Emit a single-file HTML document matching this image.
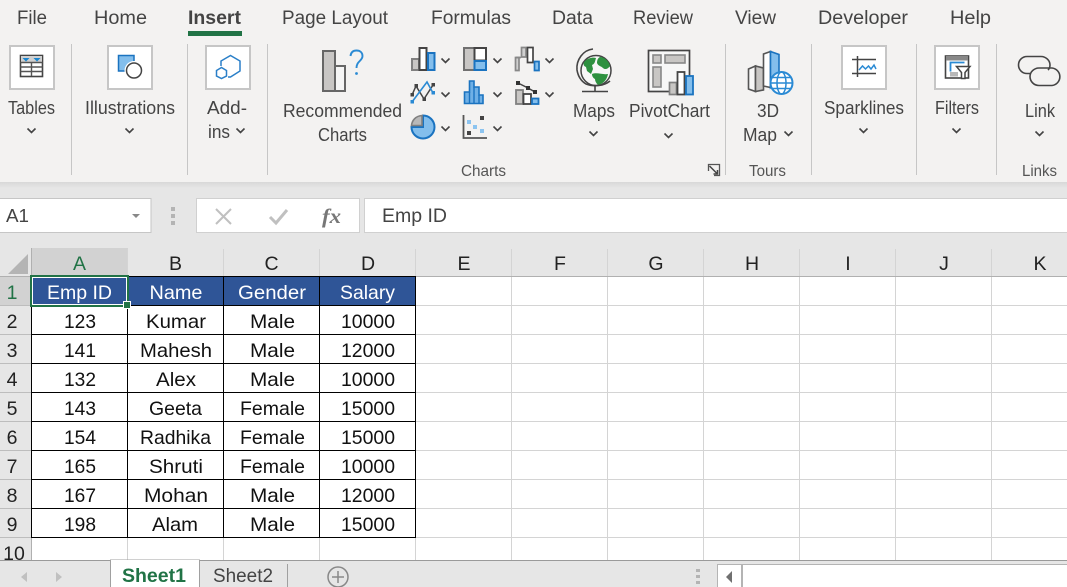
<!DOCTYPE html>
<html><head><meta charset="utf-8"><title>Excel</title>
<style>
html,body{margin:0;padding:0;width:1067px;height:587px;overflow:hidden;background:#fff}
svg{display:block;font-family:"Liberation Sans",sans-serif}
.t{font-size:19px;fill:#444}
.g{font-size:16px;fill:#555}
.c{font-size:19.5px;fill:#111;text-anchor:middle}
.h{font-size:19.5px;fill:#fff;text-anchor:middle}
.ch{font-size:19.5px;fill:#222;text-anchor:middle}
.gr line{stroke:#d4d4d4;stroke-width:1}
.bk line{stroke:#000;stroke-width:1}
.sep line{stroke:#c6c6c6;stroke-width:1}
.chev path{fill:none;stroke:#444;stroke-width:1.6}
.box{fill:#fff;stroke:#c6c6c6;stroke-width:2}
</style></head><body>
<svg width="1067" height="587" viewBox="0 0 1067 587" xmlns="http://www.w3.org/2000/svg">
<defs><linearGradient id="sh" x1="0" y1="0" x2="0" y2="1"><stop offset="0" stop-color="#d8d8d8"/><stop offset="1" stop-color="#e6e6e6"/></linearGradient></defs>
<rect width="1067" height="587" fill="#fff"/>
<rect width="1067" height="248" fill="#e6e6e6"/>
<rect width="1067" height="182" fill="#f3f2f1"/>
<rect y="182" width="1067" height="6" fill="url(#sh)"/>

<!-- tabs -->
<g class="t">
<text x="17" y="24" textLength="30" lengthAdjust="spacingAndGlyphs">File</text>
<text x="94" y="24" textLength="53" lengthAdjust="spacingAndGlyphs">Home</text>
<text x="188" y="24" textLength="53" lengthAdjust="spacingAndGlyphs" font-weight="bold">Insert</text>
<text x="282" y="24" textLength="106" lengthAdjust="spacingAndGlyphs">Page Layout</text>
<text x="431" y="24" textLength="80" lengthAdjust="spacingAndGlyphs">Formulas</text>
<text x="552" y="24" textLength="41" lengthAdjust="spacingAndGlyphs">Data</text>
<text x="633" y="24" textLength="60" lengthAdjust="spacingAndGlyphs">Review</text>
<text x="735" y="24" textLength="41" lengthAdjust="spacingAndGlyphs">View</text>
<text x="818" y="24" textLength="90" lengthAdjust="spacingAndGlyphs">Developer</text>
<text x="950" y="24" textLength="41" lengthAdjust="spacingAndGlyphs">Help</text>
</g>
<rect x="188" y="31" width="54" height="5" fill="#217346"/>

<!-- separators -->
<g class="sep">
<line x1="71.5" y1="44" x2="71.5" y2="175"/><line x1="187.5" y1="44" x2="187.5" y2="175"/>
<line x1="267.5" y1="44" x2="267.5" y2="175"/><line x1="725.5" y1="44" x2="725.5" y2="175"/>
<line x1="811.5" y1="44" x2="811.5" y2="175"/><line x1="916.5" y1="44" x2="916.5" y2="175"/>
<line x1="996.5" y1="44" x2="996.5" y2="175"/>
</g>

<!-- ribbon labels -->
<g class="t" style="font-size:18.5px">
<text x="8" y="114" textLength="47" lengthAdjust="spacingAndGlyphs">Tables</text>
<text x="85" y="114" textLength="90" lengthAdjust="spacingAndGlyphs">Illustrations</text>
<text x="207" y="114" textLength="40" lengthAdjust="spacingAndGlyphs">Add-</text>
<text x="208" y="138" textLength="22" lengthAdjust="spacingAndGlyphs">ins</text>
<text x="283" y="117" textLength="119" lengthAdjust="spacingAndGlyphs">Recommended</text>
<text x="318" y="141" textLength="49" lengthAdjust="spacingAndGlyphs">Charts</text>
<text x="573" y="117" textLength="42" lengthAdjust="spacingAndGlyphs">Maps</text>
<text x="629" y="117" textLength="81" lengthAdjust="spacingAndGlyphs">PivotChart</text>
<text x="757" y="117" textLength="22" lengthAdjust="spacingAndGlyphs">3D</text>
<text x="743" y="141" textLength="34" lengthAdjust="spacingAndGlyphs">Map</text>
<text x="824" y="114" textLength="80" lengthAdjust="spacingAndGlyphs">Sparklines</text>
<text x="935" y="114" textLength="44" lengthAdjust="spacingAndGlyphs">Filters</text>
<text x="1025" y="117" textLength="30" lengthAdjust="spacingAndGlyphs">Link</text>
</g>
<g class="g">
<text x="461" y="176" textLength="45" lengthAdjust="spacingAndGlyphs">Charts</text>
<text x="749" y="176" textLength="37" lengthAdjust="spacingAndGlyphs">Tours</text>
<text x="1022" y="176" textLength="35" lengthAdjust="spacingAndGlyphs">Links</text>
</g>

<!-- chevrons -->
<g class="chev">
<path d="M27.5 128.500l4 4 4-4M125.500 128.500l4 4 4-4M236.500 128.500l4 4 4-4"/>
<path d="M441.500 58.500l4 4 4-4M441.500 92.500l4 4 4-4M441.500 126.500l4 4 4-4"/>
<path d="M493.500 58.500l4 4 4-4M493.500 92.500l4 4 4-4M493.500 126.500l4 4 4-4"/>
<path d="M545.500 58.500l4 4 4-4M545.500 92.500l4 4 4-4"/>
<path d="M589.500 131.500l4 4 4-4M664.500 133.500l4 4 4-4M784.500 131.500l4 4 4-4M859.500 128.500l4 4 4-4M952.500 128.500l4 4 4-4M1035.500 131.500l4 4 4-4"/>
</g>

<!-- boxed buttons -->
<rect class="box" x="10" y="46" width="44" height="43"/>
<rect class="box" x="108" y="46" width="44" height="43"/>
<rect class="box" x="206" y="46" width="44" height="43"/>
<rect class="box" x="842" y="46" width="44" height="43"/>
<rect class="box" x="935" y="46" width="44" height="43"/>

<!-- tables icon -->
<rect x="20.500" y="55.500" width="22" height="21" fill="#fff" stroke="#444" stroke-width="1.600"/>
<rect x="21" y="56" width="21" height="6" fill="#d0d0d0"/>
<path d="M22.500 58h7l-3.500 3.500zM33.500 58h7l-3.500 3.500z" fill="#1a86d0"/>
<path d="M20.500 62.500h22M20.500 67h22M20.500 71.500h22M31.500 62v14" stroke="#555" stroke-width="1.400" fill="none"/>

<!-- illustrations icon -->
<rect x="118.500" y="55.500" width="15.500" height="15.500" fill="#83beec" stroke="#1a73c0" stroke-width="1.500"/>
<circle cx="134" cy="70.500" r="9.500" fill="#fff"/>
<circle cx="134" cy="70.500" r="7.500" fill="#fff" stroke="#444" stroke-width="1.500"/>

<!-- add-ins icon -->
<path d="M221 66v-5l9.500-5.500 9.500 5.500v10l-9.500 6h-2.500" fill="none" stroke="#2a7fc8" stroke-width="1.500"/>
<path d="M221.500 67.500l5 3v5.500l-5 2.500-5-2.500v-5.500z" fill="none" stroke="#2a7fc8" stroke-width="1.500"/>

<!-- recommended charts icon -->
<rect x="323" y="51" width="12" height="40" fill="#c8c6c4" stroke="#666" stroke-width="2"/>
<rect x="335" y="66" width="10" height="25" fill="#f5f5f5" stroke="#666" stroke-width="2"/>
<path d="M350.500 56c.5-4 3-5.500 6-5.500 3.500 0 6 2 6 5.500 0 5-6 5-6 12" fill="none" stroke="#2a8ad4" stroke-width="1.900"/>
<circle cx="356.500" cy="73.500" r="1.400" fill="#2a8ad4"/>

<!-- bar -->
<rect x="412" y="59" width="7" height="11" fill="#c8c6c4" stroke="#808080" stroke-width="2"/>
<rect x="419.500" y="48" width="7" height="22" fill="#fff" stroke="#444" stroke-width="2"/>
<rect x="428" y="53" width="6.500" height="17" fill="#83beec" stroke="#1a73c0" stroke-width="2"/>
<!-- line -->
<path d="M412 95l4-9 8 13 9-14" fill="none" stroke="#444" stroke-width="1.500"/>
<path d="M412 102l15-20 6 11" fill="none" stroke="#2a8ad4" stroke-width="1.600"/>
<path d="M410.500 100h3.500v3.500h-3.500zM431.500 91h3.500v3.500h-3.500z" fill="#2a8ad4"/>
<path d="M410.500 93h3.500v3.500h-3.500zM414.500 84h3.500v3.500h-3.500zM422.500 97.500h3.500v3.500h-3.500zM431.500 83h3.500v3.500h-3.500z" fill="#444"/>
<!-- pie -->
<path d="M423 115.500a11.500 11.500 0 1 1-11.500 11.500h11.500z" fill="#83beec" stroke="#1a73c0" stroke-width="2"/>
<path d="M422 115.500v10h-10.500c.5-5 4-9.500 10.500-10z" fill="#b8b8b8" stroke="#808080" stroke-width="1.600"/>
<!-- treemap -->
<rect x="464" y="48" width="10.500" height="22" fill="#c8c6c4" stroke="#707070" stroke-width="2"/>
<rect x="474.500" y="48" width="11.500" height="12.500" fill="#fff" stroke="#444" stroke-width="2"/>
<rect x="474.500" y="61" width="11.500" height="9" fill="#83beec" stroke="#1a73c0" stroke-width="2"/>
<!-- histogram -->
<path d="M464.500 103.500v-11.500h5v-11h4.500v6h5v8h4v8.500z" fill="#6fb0e6" stroke="#1a73c0" stroke-width="1.600"/>
<path d="M469.500 103v-11M474 103v-16M479 103v-8" stroke="#1a73c0" stroke-width="1.400"/>
<!-- scatter -->
<path d="M463.500 115v23H487" fill="none" stroke="#555" stroke-width="1.800"/>
<rect x="480" y="116" width="4" height="4" fill="#444"/>
<rect x="467" y="120" width="4" height="4" fill="#8cc4f0"/>
<rect x="473" y="125" width="4" height="4" fill="#8cc4f0"/>
<rect x="480" y="129" width="4" height="4" fill="#8cc4f0"/>
<rect x="467" y="131" width="4" height="4" fill="#444"/>
<!-- waterfall -->
<path d="M515.500 70.500V57.500h3.500v13z" fill="#d0d0d0" stroke="#888" stroke-width="1.700"/>
<path d="M521.500 57V47.500h4.500V57zM516 57.500h5" fill="#d0d0d0" stroke="#888" stroke-width="1.700"/>
<path d="M527.500 47.500h5.500v15h-5.500z" fill="#fff" stroke="#444" stroke-width="1.700"/>
<path d="M534.500 61.500h4.500v9h-4.500z" fill="#83beec" stroke="#1a73c0" stroke-width="1.700"/>
<!-- combo -->
<path d="M518 83l10 5 7 4" fill="none" stroke="#444" stroke-width="1.500"/>
<path d="M516 81h4v4h-4zM526 86h4v4h-4zM533 90h4v4h-4z" fill="#333"/>
<rect x="516" y="90" width="7" height="14" fill="#c8c6c4" stroke="#808080" stroke-width="1.800"/>
<rect x="523.500" y="94" width="7.500" height="10" fill="#fff" stroke="#444" stroke-width="1.800"/>
<rect x="532" y="98.500" width="6.500" height="5.500" fill="#83beec" stroke="#1a73c0" stroke-width="1.800"/>

<!-- globe -->
<circle cx="596" cy="70.500" r="15" fill="#f7f7f7" stroke="#444" stroke-width="1.500"/>
<path d="M585 61c3-3 8-4 11-3-1 3-1 6-4 7l1 4-2 5-4-3-1-4c-3-1-3-4-1-6z" fill="#2e9140"/>
<path d="M600 57c4 0 9 4 10 9-2 3-5 4-7 2-2-2-5-2-6-5 0-3 1-5 3-6z" fill="#2e9140"/>
<path d="M592 74c5-2 11 1 16 0-1 6-5 10-10 11-2-2-3-4-3-6-2-1-3-3-3-5z" fill="#2e9140"/>
<path d="M593 49c-10 1-17 11-16 21 1 6 4 11 9 14 8 3 18 2 24-3" fill="none" stroke="#444" stroke-width="1.600"/>
<path d="M595 86v5M582 91.500h26" stroke="#444" stroke-width="1.600" fill="none"/>

<!-- pivot chart -->
<rect x="648.500" y="50.500" width="41" height="41" fill="#f7f7f7" stroke="#444" stroke-width="1.700"/>
<rect x="653" y="55" width="8" height="8" fill="#c8c6c4" stroke="#888" stroke-width="1.600"/>
<rect x="665" y="55" width="20" height="8" fill="#c8c6c4" stroke="#888" stroke-width="1.600"/>
<rect x="653" y="67" width="8" height="20" fill="#c8c6c4" stroke="#888" stroke-width="1.600"/>
<rect x="669.500" y="82.500" width="7" height="12" fill="#c8c6c4" stroke="#808080" stroke-width="1.700"/>
<rect x="677.500" y="72" width="7" height="22.500" fill="#fff" stroke="#444" stroke-width="1.800"/>
<rect x="686" y="76" width="7" height="18.500" fill="#83beec" stroke="#1a73c0" stroke-width="1.800"/>

<!-- 3D map -->
<path d="M748.500 69l7-3v25.500l-7-2.500z" fill="#f7f7f7" stroke="#555" stroke-width="1.600"/>
<path d="M755.500 66l8 2v22l-8 1.500z" fill="#c8c6c4" stroke="#555" stroke-width="1.600"/>
<path d="M763.500 54l7-2.500v36l-7-1.500z" fill="#fff" stroke="#555" stroke-width="1.600"/>
<path d="M770.500 51.500l8.500 3v24l-8.500 9z" fill="#83beec" stroke="#1a73c0" stroke-width="1.600"/>
<circle cx="781.500" cy="83" r="11" fill="#fff" stroke="#2a8ad4" stroke-width="2"/>
<ellipse cx="781.500" cy="83" rx="4.500" ry="11" fill="none" stroke="#2a8ad4" stroke-width="1.500"/>
<path d="M770.500 83h22M772.500 77.500h18M772.500 88.500h18" stroke="#2a8ad4" stroke-width="1.400" fill="none"/>

<!-- sparklines -->
<path d="M852 59.500h24M852 73.500h24M857.500 56v21" stroke="#444" stroke-width="1.500" fill="none"/>
<path d="M859 70l3.500-4 3 3 3-3 2.500 3 3-4 2 4" fill="none" stroke="#2a8ad4" stroke-width="1.500"/>

<!-- filters -->
<rect x="945.500" y="56" width="23" height="22" fill="#fff" stroke="#444" stroke-width="1.600"/>
<rect x="946" y="56" width="22" height="4.500" fill="#888"/>
<path d="M950.500 71.500v-9h14" fill="none" stroke="#2a8ad4" stroke-width="1.800"/>
<rect x="950" y="72" width="8" height="4.500" fill="#b8b8b8"/>
<path d="M956.500 66.500h13.500l-5 6v6l-3.500 0v-6z" fill="#fff" stroke="#444" stroke-width="1.500"/>

<!-- link -->
<path d="M1030 73.500h-3a8.500 8.500 0 0 1 0-17h14c5 0 9 4 9 8.500 0 2-1 4-2 5" fill="none" stroke="#444" stroke-width="1.600"/>
<path d="M1041 68h11a8.800 8.800 0 0 1 0 17.500h-13c-5 0-9-4-9-9 0-4.500 4-8.500 9-8.500h2" fill="none" stroke="#444" stroke-width="1.600"/>

<!-- dialog launcher -->
<path d="M708.500 171v-6.500h11v11H714" fill="none" stroke="#555" stroke-width="1.300"/>
<path d="M709.500 166l8 8M713.500 174h4v-4" fill="none" stroke="#444" stroke-width="1.500"/>

<!-- formula bar -->
<rect x="-2" y="198.500" width="153" height="34" fill="#fff" stroke="#c6c6c6"/>
<text x="6" y="222" textLength="23" lengthAdjust="spacingAndGlyphs" style="font-size:18.500px;fill:#444">A1</text>
<path d="M132 214h8l-4 4z" fill="#888"/>
<path d="M171 207h4v4h-4zM171 214h4v4h-4zM171 221h4v4h-4z" fill="#b4b4b4"/>
<rect x="196.500" y="198.500" width="163" height="34" fill="#fff" stroke="#d0d0d0"/>
<path d="M216 209l15 15M231 209l-15 15" stroke="#c0c0c0" stroke-width="2" fill="none"/>
<path d="M270 217l6 6 11-13" stroke="#c0c0c0" stroke-width="3" fill="none"/>
<text x="322" y="223" style="font-size:21px;fill:#777;font-family:'Liberation Serif',serif;font-style:italic;font-weight:bold" textLength="19" lengthAdjust="spacingAndGlyphs">fx</text>
<rect x="364.500" y="198.500" width="704" height="34" fill="#fff" stroke="#d0d0d0"/>
<text x="382" y="222" textLength="65" lengthAdjust="spacingAndGlyphs" style="font-size:19.500px;fill:#444">Emp ID</text>

<!-- grid -->
<rect x="0" y="248" width="1067" height="29" fill="#e6e6e6"/>
<rect x="0" y="248" width="31" height="312" fill="#e6e6e6"/>
<rect x="31" y="248" width="97" height="28" fill="#d2d2d2"/>
<rect x="0" y="277" width="31" height="29" fill="#d2d2d2"/>
<path d="M8 274L28 254V274z" fill="#b4b4b4"/>
<rect x="31" y="277" width="1036" height="283" fill="#fff"/>
<g class="gr">
<line x1="511.500" y1="249" x2="511.500" y2="560"/><line x1="607.500" y1="249" x2="607.500" y2="560"/>
<line x1="703.500" y1="249" x2="703.500" y2="560"/><line x1="799.500" y1="249" x2="799.500" y2="560"/>
<line x1="895.500" y1="249" x2="895.500" y2="560"/><line x1="991.500" y1="249" x2="991.500" y2="560"/>
<line x1="127.500" y1="538" x2="127.500" y2="560"/><line x1="223.500" y1="538" x2="223.500" y2="560"/>
<line x1="319.500" y1="538" x2="319.500" y2="560"/><line x1="415.500" y1="538" x2="415.500" y2="560"/>
<line x1="127.500" y1="249" x2="127.500" y2="276"/><line x1="223.500" y1="249" x2="223.500" y2="276"/>
<line x1="319.500" y1="249" x2="319.500" y2="276"/><line x1="415.500" y1="249" x2="415.500" y2="276"/>
<line x1="416" y1="305.500" x2="1067" y2="305.500"/><line x1="416" y1="334.500" x2="1067" y2="334.500"/>
<line x1="416" y1="363.500" x2="1067" y2="363.500"/><line x1="416" y1="392.500" x2="1067" y2="392.500"/>
<line x1="416" y1="421.500" x2="1067" y2="421.500"/><line x1="416" y1="450.500" x2="1067" y2="450.500"/>
<line x1="416" y1="479.500" x2="1067" y2="479.500"/><line x1="416" y1="508.500" x2="1067" y2="508.500"/>
<line x1="416" y1="537.500" x2="1067" y2="537.500"/>
</g>
<line x1="0" y1="276.500" x2="1067" y2="276.500" stroke="#b0b0b0"/>
<line x1="31.500" y1="248" x2="31.500" y2="560" stroke="#b0b0b0"/>
<g stroke="#bdbdbd">
<line x1="0" y1="305.500" x2="31" y2="305.500"/><line x1="0" y1="334.500" x2="31" y2="334.500"/>
<line x1="0" y1="363.500" x2="31" y2="363.500"/><line x1="0" y1="392.500" x2="31" y2="392.500"/>
<line x1="0" y1="421.500" x2="31" y2="421.500"/><line x1="0" y1="450.500" x2="31" y2="450.500"/>
<line x1="0" y1="479.500" x2="31" y2="479.500"/><line x1="0" y1="508.500" x2="31" y2="508.500"/>
<line x1="0" y1="537.500" x2="31" y2="537.500"/>
</g>

<!-- table header fill -->
<rect x="32" y="277" width="384" height="28" fill="#2f5597"/>
<g class="bk">
<line x1="32" y1="276.500" x2="416" y2="276.500"/>
<line x1="32" y1="305.500" x2="416" y2="305.500"/><line x1="32" y1="334.500" x2="416" y2="334.500"/>
<line x1="32" y1="363.500" x2="416" y2="363.500"/><line x1="32" y1="392.500" x2="416" y2="392.500"/>
<line x1="32" y1="421.500" x2="416" y2="421.500"/><line x1="32" y1="450.500" x2="416" y2="450.500"/>
<line x1="32" y1="479.500" x2="416" y2="479.500"/><line x1="32" y1="508.500" x2="416" y2="508.500"/>
<line x1="32" y1="537.500" x2="416" y2="537.500"/>
<line x1="31.500" y1="277" x2="31.500" y2="538"/>
<line x1="127.500" y1="277" x2="127.500" y2="538"/><line x1="223.500" y1="277" x2="223.500" y2="538"/>
<line x1="319.500" y1="277" x2="319.500" y2="538"/><line x1="415.500" y1="277" x2="415.500" y2="538"/>
</g>

<!-- column headings -->
<g class="ch">
<text x="79.500" y="270" style="fill:#217346">A</text><text x="175.500" y="270">B</text><text x="271.500" y="270">C</text>
<text x="368" y="270">D</text><text x="464" y="270">E</text><text x="560" y="270">F</text>
<text x="656" y="270">G</text><text x="752" y="270">H</text><text x="848" y="270">I</text>
<text x="944" y="270">J</text><text x="1040" y="270">K</text>
</g>
<g class="ch">
<text x="12" y="299" style="fill:#217346">1</text><text x="12" y="328">2</text><text x="12" y="357">3</text>
<text x="12" y="386">4</text><text x="12" y="415">5</text><text x="12" y="444">6</text>
<text x="12" y="473">7</text><text x="12" y="502">8</text><text x="12" y="531">9</text>
<text x="14" y="560">10</text>
</g>

<!-- header text -->
<g class="h">
<text x="79.500" y="299" textLength="65" lengthAdjust="spacingAndGlyphs">Emp ID</text>
<text x="176" y="299" textLength="53" lengthAdjust="spacingAndGlyphs">Name</text>
<text x="272" y="299" textLength="68" lengthAdjust="spacingAndGlyphs">Gender</text>
<text x="367.500" y="299" textLength="55" lengthAdjust="spacingAndGlyphs">Salary</text>
</g>

<!-- cells -->
<g class="c">
<text x="80" y="328" textLength="32" lengthAdjust="spacingAndGlyphs">123</text>
<text x="176" y="328" textLength="60" lengthAdjust="spacingAndGlyphs">Kumar</text>
<text x="272.500" y="328" textLength="45" lengthAdjust="spacingAndGlyphs">Male</text>
<text x="368" y="328" textLength="54" lengthAdjust="spacingAndGlyphs">10000</text>
<text x="80" y="357" textLength="32" lengthAdjust="spacingAndGlyphs">141</text>
<text x="176" y="357" textLength="72" lengthAdjust="spacingAndGlyphs">Mahesh</text>
<text x="272.500" y="357" textLength="45" lengthAdjust="spacingAndGlyphs">Male</text>
<text x="368" y="357" textLength="54" lengthAdjust="spacingAndGlyphs">12000</text>
<text x="80" y="386" textLength="32" lengthAdjust="spacingAndGlyphs">132</text>
<text x="176" y="386" textLength="40" lengthAdjust="spacingAndGlyphs">Alex</text>
<text x="272.500" y="386" textLength="45" lengthAdjust="spacingAndGlyphs">Male</text>
<text x="368" y="386" textLength="54" lengthAdjust="spacingAndGlyphs">10000</text>
<text x="80" y="415" textLength="32" lengthAdjust="spacingAndGlyphs">143</text>
<text x="175.500" y="415" textLength="53" lengthAdjust="spacingAndGlyphs">Geeta</text>
<text x="272.500" y="415" textLength="65" lengthAdjust="spacingAndGlyphs">Female</text>
<text x="368" y="415" textLength="54" lengthAdjust="spacingAndGlyphs">15000</text>
<text x="80" y="444" textLength="32" lengthAdjust="spacingAndGlyphs">154</text>
<text x="175.500" y="444" textLength="71" lengthAdjust="spacingAndGlyphs">Radhika</text>
<text x="272.500" y="444" textLength="65" lengthAdjust="spacingAndGlyphs">Female</text>
<text x="368" y="444" textLength="54" lengthAdjust="spacingAndGlyphs">15000</text>
<text x="80" y="473" textLength="32" lengthAdjust="spacingAndGlyphs">165</text>
<text x="176" y="473" textLength="54" lengthAdjust="spacingAndGlyphs">Shruti</text>
<text x="272.500" y="473" textLength="65" lengthAdjust="spacingAndGlyphs">Female</text>
<text x="368" y="473" textLength="54" lengthAdjust="spacingAndGlyphs">10000</text>
<text x="80" y="502" textLength="32" lengthAdjust="spacingAndGlyphs">167</text>
<text x="176" y="502" textLength="64" lengthAdjust="spacingAndGlyphs">Mohan</text>
<text x="272.500" y="502" textLength="45" lengthAdjust="spacingAndGlyphs">Male</text>
<text x="368" y="502" textLength="54" lengthAdjust="spacingAndGlyphs">12000</text>
<text x="80" y="531" textLength="32" lengthAdjust="spacingAndGlyphs">198</text>
<text x="175" y="531" textLength="46" lengthAdjust="spacingAndGlyphs">Alam</text>
<text x="272.500" y="531" textLength="45" lengthAdjust="spacingAndGlyphs">Male</text>
<text x="368" y="531" textLength="54" lengthAdjust="spacingAndGlyphs">15000</text>
</g>

<!-- selection -->
<rect x="32.500" y="277.500" width="94" height="27" fill="none" stroke="#fff" stroke-width="1"/>
<rect x="31" y="276" width="97" height="30" fill="none" stroke="#217346" stroke-width="2"/>
<rect x="123.500" y="301.500" width="7" height="7" fill="#217346" stroke="#fff" stroke-width="1"/>

<!-- sheet tabs -->
<rect x="0" y="560" width="1067" height="27" fill="#e6e6e6"/>
<rect x="0" y="560" width="1067" height="1" fill="#9a9a9a"/>
<path d="M27 572v10l-6-5zM56 572v10l6-5z" fill="#c0c0c0"/>
<rect x="110.500" y="560" width="89" height="28" fill="#fff" stroke="#a0a0a0"/>
<rect x="111" y="560" width="88" height="3" fill="#fff"/>
<text x="122" y="582" textLength="64" lengthAdjust="spacingAndGlyphs" font-weight="bold" style="font-size:19px;fill:#217346">Sheet1</text>
<text x="213" y="582" textLength="60" lengthAdjust="spacingAndGlyphs" style="font-size:19px;fill:#444">Sheet2</text>
<line x1="287.500" y1="564" x2="287.500" y2="587" stroke="#a0a0a0"/>
<circle cx="338" cy="577" r="10" fill="none" stroke="#888" stroke-width="1.500"/>
<path d="M332 577h12M338 571v12" stroke="#888" stroke-width="1.500"/>
<path d="M696 569h4v3h-4zM696 575h4v3h-4zM696 581h4v3h-4z" fill="#b4b4b4"/>
<rect x="717" y="564" width="350" height="23" fill="#fff"/>
<rect x="717" y="564" width="350" height="1" fill="#b4b4b4"/>
<rect x="717" y="564" width="1" height="23" fill="#b4b4b4"/>
<rect x="741" y="564" width="2" height="23" fill="#b4b4b4"/>
<path d="M732 571v12l-6-6z" fill="#707070"/>
</svg>
</body></html>
